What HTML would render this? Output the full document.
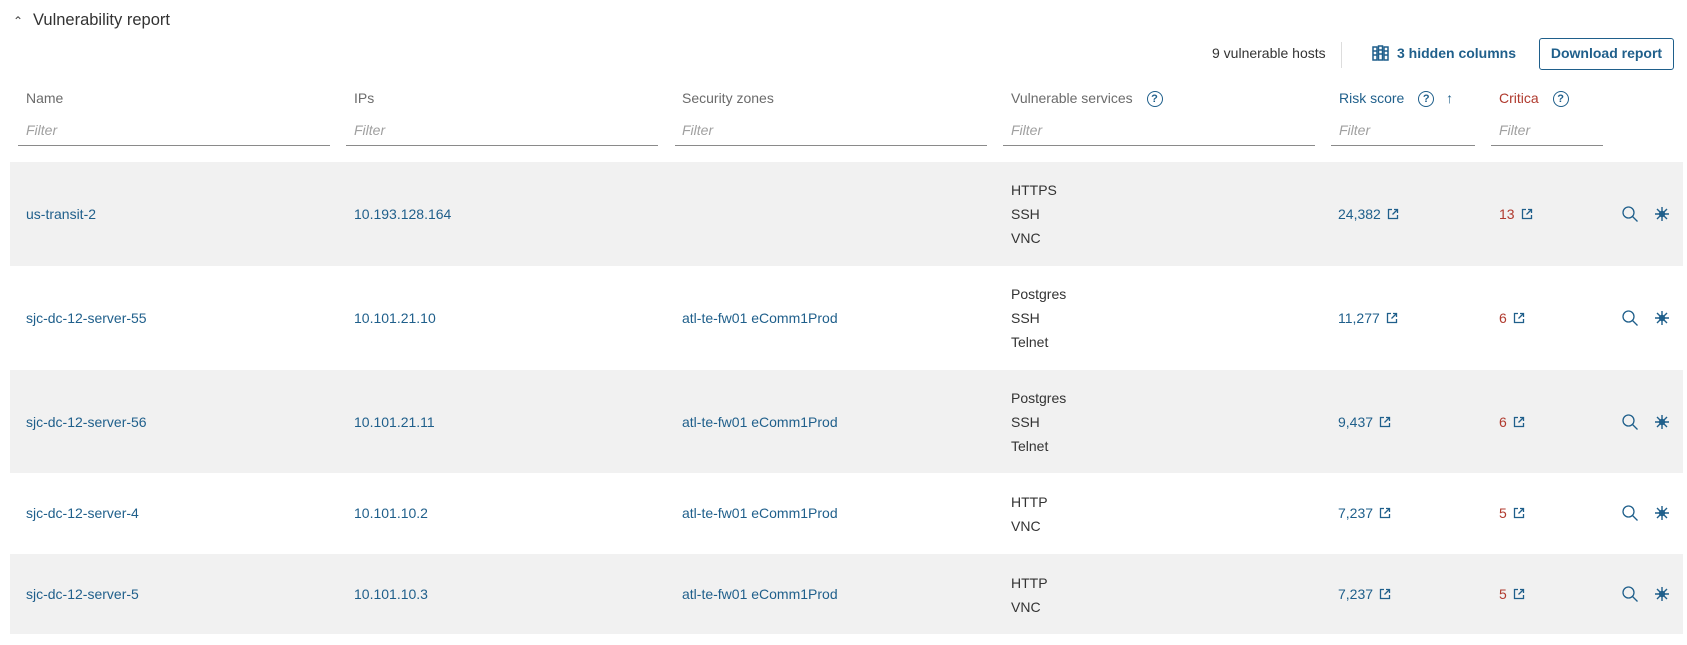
<!DOCTYPE html>
<html><head><style>
body{margin:0;width:1687px;height:645px;background:#fff;font-family:"Liberation Sans",Arial,sans-serif;position:relative;overflow:hidden;color:#333}
.a{position:absolute;white-space:nowrap}
.h{font-size:14px;color:#6b6b6b}
.f{font-size:14px;color:#a0a0a0;font-style:italic}
.u{position:absolute;height:1px;background:#8a8a8a;top:145px}
.row{position:absolute;left:10px;width:1673px}
.g{background:#f1f1f1}
.l{color:#1f5f8b;font-size:14px}
.r{color:#b03a2e;font-size:14px}
.s{font-size:14px;color:#333;line-height:24px}
.q{display:inline-block;width:14px;height:14px;border:1.6px solid #1f5f8b;border-radius:50%;font-size:11px;line-height:14px;text-align:center;color:#1f5f8b;font-weight:bold;font-style:normal;vertical-align:middle}
.x{display:inline-block;width:12px;height:12px;margin-left:6px;vertical-align:-1px}
</style></head><body>
<div class="a" style="left:13px;top:14px;font-size:12px;color:#444">&#8963;</div>
<div class="a" style="left:33px;top:11px;font-size:16.5px;color:#333">Vulnerability report</div>
<div class="a" style="left:1212px;top:45px;font-size:14px;color:#333">9 vulnerable hosts</div>
<div class="a" style="left:1341px;top:42px;width:1px;height:26px;background:#ddd"></div>
<svg class="a" style="left:1372px;top:45px" width="17" height="17" viewBox="0 0 17 17" fill="none" stroke="#1f5f8b" stroke-width="1.5"><rect x="1" y="2" width="4" height="13"/><rect x="6.5" y="1" width="4" height="14"/><rect x="12" y="2" width="4" height="13"/><path d="M1 6h4M1 10h4M6.5 5h4M6.5 9h4M12 6h4M12 10h4"/></svg>
<div class="a" style="left:1397px;top:45px;font-size:14px;color:#1f5f8b;font-weight:bold">3 hidden columns</div>
<div class="a" style="left:1539px;top:38px;width:135px;height:32px;border:1.5px solid #1f5f8b;border-radius:3px;box-sizing:border-box;text-align:center;line-height:29px;font-size:14px;color:#1f5f8b;font-weight:bold">Download report</div>

<div class="a h" style="left:26px;top:90px">Name</div>
<div class="a h" style="left:354px;top:90px">IPs</div>
<div class="a h" style="left:682px;top:90px">Security zones</div>
<div class="a h" style="left:1011px;top:90px">Vulnerable services <span class="q" style="margin-left:10px">?</span></div>
<div class="a" style="left:1339px;top:90px;font-size:14px;color:#1f5f8b">Risk score <span class="q" style="margin-left:10px">?</span> <span style="margin-left:8px">&#8593;</span></div>
<div class="a r" style="left:1499px;top:90px">Critica <span class="q" style="margin-left:10px">?</span></div>
<div class="a f" style="left:26px;top:122px">Filter</div><div class="u" style="left:18px;width:312px"></div>
<div class="a f" style="left:354px;top:122px">Filter</div><div class="u" style="left:346px;width:312px"></div>
<div class="a f" style="left:682px;top:122px">Filter</div><div class="u" style="left:675px;width:312px"></div>
<div class="a f" style="left:1011px;top:122px">Filter</div><div class="u" style="left:1003px;width:312px"></div>
<div class="a f" style="left:1339px;top:122px">Filter</div><div class="u" style="left:1331px;width:144px"></div>
<div class="a f" style="left:1499px;top:122px">Filter</div><div class="u" style="left:1491px;width:112px"></div>

<div class="row g" style="top:162px;height:104px"></div>
<div class="row" style="top:266px;height:104px"></div>
<div class="row g" style="top:370px;height:103px"></div>
<div class="row" style="top:473px;height:81px"></div>
<div class="row g" style="top:554px;height:80px"></div>

<svg width="0" height="0" style="position:absolute"><defs><symbol id="ex" viewBox="0 0 12 12"><g fill="none" stroke="#1f5f8b" stroke-width="1.3"><path d="M5 1.5H1.5v9h9V7"/><path d="M7 1.5h3.5V5M10.5 1.5L5.5 6.5"/></g></symbol></defs></svg>

<div class="a l" style="left:26px;top:206px">us-transit-2</div>
<div class="a l" style="left:354px;top:206px">10.193.128.164</div>
<div class="a s" style="left:1011px;top:178px">HTTPS<br>SSH<br>VNC</div>
<div class="a l" style="left:1338px;top:206px">24,382<svg class="x"><use href="#ex"/></svg></div>
<div class="a r" style="left:1499px;top:206px">13<svg class="x"><use href="#ex"/></svg></div>

<div class="a l" style="left:26px;top:310px">sjc-dc-12-server-55</div>
<div class="a l" style="left:354px;top:310px">10.101.21.10</div>
<div class="a l" style="left:682px;top:310px">atl-te-fw01 eComm1Prod</div>
<div class="a s" style="left:1011px;top:282px">Postgres<br>SSH<br>Telnet</div>
<div class="a l" style="left:1338px;top:310px">11,277<svg class="x"><use href="#ex"/></svg></div>
<div class="a r" style="left:1499px;top:310px">6<svg class="x"><use href="#ex"/></svg></div>

<div class="a l" style="left:26px;top:414px">sjc-dc-12-server-56</div>
<div class="a l" style="left:354px;top:414px">10.101.21.11</div>
<div class="a l" style="left:682px;top:414px">atl-te-fw01 eComm1Prod</div>
<div class="a s" style="left:1011px;top:386px">Postgres<br>SSH<br>Telnet</div>
<div class="a l" style="left:1338px;top:414px">9,437<svg class="x"><use href="#ex"/></svg></div>
<div class="a r" style="left:1499px;top:414px">6<svg class="x"><use href="#ex"/></svg></div>

<div class="a l" style="left:26px;top:505px">sjc-dc-12-server-4</div>
<div class="a l" style="left:354px;top:505px">10.101.10.2</div>
<div class="a l" style="left:682px;top:505px">atl-te-fw01 eComm1Prod</div>
<div class="a s" style="left:1011px;top:490px">HTTP<br>VNC</div>
<div class="a l" style="left:1338px;top:505px">7,237<svg class="x"><use href="#ex"/></svg></div>
<div class="a r" style="left:1499px;top:505px">5<svg class="x"><use href="#ex"/></svg></div>

<div class="a l" style="left:26px;top:586px">sjc-dc-12-server-5</div>
<div class="a l" style="left:354px;top:586px">10.101.10.3</div>
<div class="a l" style="left:682px;top:586px">atl-te-fw01 eComm1Prod</div>
<div class="a s" style="left:1011px;top:571px">HTTP<br>VNC</div>
<div class="a l" style="left:1338px;top:586px">7,237<svg class="x"><use href="#ex"/></svg></div>
<div class="a r" style="left:1499px;top:586px">5<svg class="x"><use href="#ex"/></svg></div>

<svg class="a" style="left:0;top:0" width="1687" height="645">
<defs>
<g id="ic" fill="none" stroke="#1f5f8b" stroke-width="1.3">
<circle cx="6.5" cy="6.5" r="5.5"/><path d="M10.5 10.5l5 5"/>
<g transform="translate(40,8)" stroke-width="1.4"><path d="M-7 0h14M0 -7v14M-5 -5l10 10M5 -5l-10 10"/><circle r="2.5"/></g>
</g>
</defs>
<use href="#ic" x="1622" y="206"/>
<use href="#ic" x="1622" y="310"/>
<use href="#ic" x="1622" y="414"/>
<use href="#ic" x="1622" y="505"/>
<use href="#ic" x="1622" y="586"/>
</svg>
</body></html>
